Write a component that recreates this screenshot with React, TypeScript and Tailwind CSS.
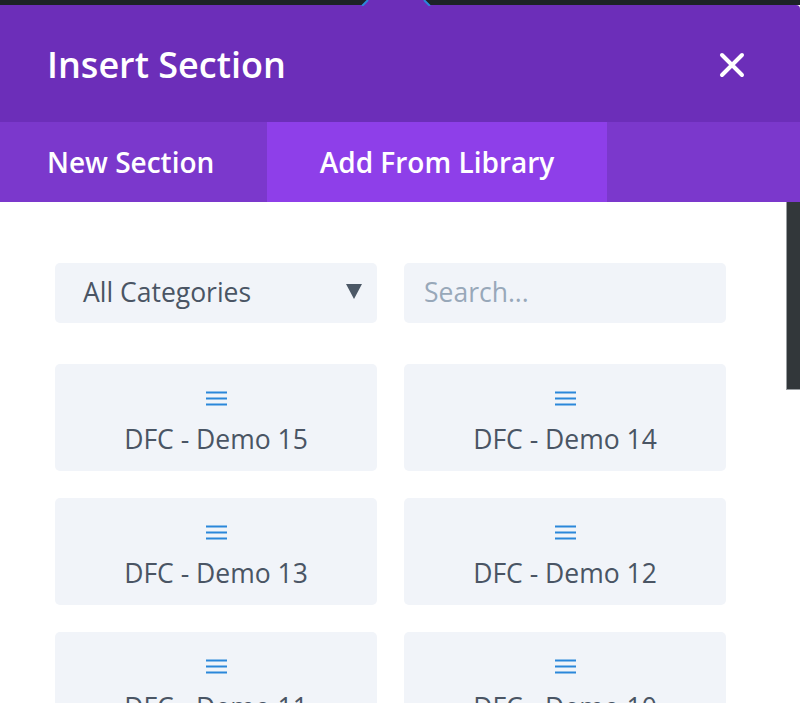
import React from 'react'

const FONT = { fontFamily: '"Open Sans", "Noto Sans", sans-serif' }

const ITEMS = ['DFC - Demo 15', 'DFC - Demo 14', 'DFC - Demo 13', 'DFC - Demo 12', 'DFC - Demo 11', 'DFC - Demo 10']

function MenuIcon() {
  return (
    <svg width="21" height="15" viewBox="0 0 21 15" className="block">
      <rect x="0" y="0.5" width="21" height="2" fill="#2b87da" />
      <rect x="0" y="6.5" width="21" height="2" fill="#2b87da" />
      <rect x="0" y="12.5" width="21" height="2" fill="#2b87da" />
    </svg>
  )
}

function LayoutCard({ label }: { label: string }) {
  return (
    <div className="h-[107px] rounded-[5px] bg-[#f1f4f9] flex flex-col items-center pt-[27px]">
      <MenuIcon />
      <div className="mt-[17px] text-[26.5px] font-medium leading-[32px] text-[#4a5564]">{label}</div>
    </div>
  )
}

export default function App() {
  return (
    <div className="relative w-[800px] h-[703px] overflow-hidden bg-white" style={FONT}>
      {/* dark strip above the modal */}
      <div className="h-[5px] bg-[#1d2327]" />

      {/* caret notch */}
      <svg className="absolute left-[360px] top-0" width="72" height="6" viewBox="0 0 72 6">
        <polygon points="2,6 8,0 64,0 70,6" fill="#6c2eb9" />
        <line x1="2" y1="6" x2="8" y2="0" stroke="#2b87da" strokeWidth="2" />
        <line x1="64" y1="0" x2="70" y2="6" stroke="#2b87da" strokeWidth="2" />
      </svg>

      {/* header */}
      <div className="h-[117px] bg-[#6c2eb9] rounded-tr-[4px] flex items-center justify-between pl-[47px] pr-[55px] pt-[3px]">
        <h1 className="text-[36px] font-semibold text-white leading-none">Insert Section</h1>
        <svg width="26" height="26" viewBox="0 0 26 26">
          <path d="M3 3 L23 23 M23 3 L3 23" stroke="white" strokeWidth="4" strokeLinecap="round" />
        </svg>
      </div>

      {/* tabs */}
      <div className="h-[80px] bg-[#7b38cc] flex">
        <div className="w-[267px] pl-[47px] flex items-center text-[28px] font-semibold text-white">New Section</div>
        <div className="w-[340px] bg-[#8e3fe9] flex items-center justify-center text-[28px] font-semibold text-white">
          Add From Library
        </div>
      </div>

      {/* body */}
      <div className="pl-[55px] pt-[61px]">
        <div className="grid grid-cols-[322px_322px] gap-x-[27px]">
          <div className="h-[60px] rounded-[5px] bg-[#f1f4f9] flex items-center justify-between pl-[28px] pr-[15px]">
            <span className="text-[26.5px] font-medium text-[#4a5564]">All Categories</span>
            <svg width="16" height="15" viewBox="0 0 16 15" className="mb-[3px]">
              <polygon points="0,0 16,0 8,15" fill="#4c5866" />
            </svg>
          </div>
          <div className="h-[60px] rounded-[5px] bg-[#f1f4f9] flex items-center pl-[20px]">
            <span className="text-[26.5px] font-medium text-[#98a8b9]">Search...</span>
          </div>
        </div>

        <div className="grid grid-cols-[322px_322px] gap-x-[27px] gap-y-[27px] mt-[41px]">
          {ITEMS.map((item) => (
            <LayoutCard key={item} label={item} />
          ))}
        </div>
      </div>

      {/* scrollbar thumb */}
      <div className="absolute left-[786px] top-[202px] w-[14px] h-[188px] bg-[#32373a] border-l border-b border-[#9a9ea1]" />
    </div>
  )
}
